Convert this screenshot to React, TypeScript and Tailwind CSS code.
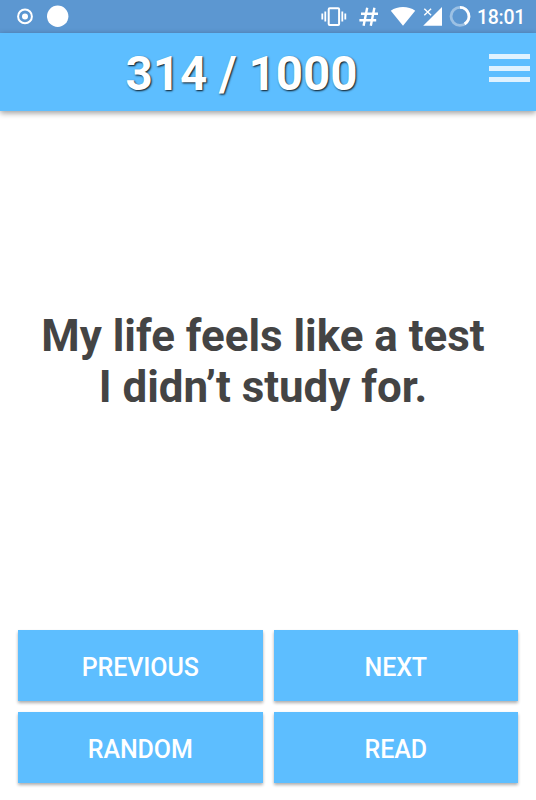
const BLUE_BUTTON =
  "flex h-[71px] items-center justify-center bg-[#5dbeff] pt-[3px] text-[25px] leading-none font-medium tracking-[-0.1px] text-white shadow-[0_2px_3px_rgba(0,0,0,0.32)]";

function StatusBar() {
  return (
    <div className="flex h-[33px] items-center bg-[#5c97d1] text-white">
      <svg className="ml-4 h-[33px] w-[18px]" viewBox="16 0 18 33" fill="none">
        <circle cx="25" cy="16.4" r="6.9" stroke="currentColor" strokeWidth="2" />
        <circle cx="25" cy="16.4" r="3" fill="currentColor" />
      </svg>
      <svg className="ml-3 h-[33px] w-6" viewBox="46 0 24 33">
        <circle cx="57.7" cy="16.3" r="10.7" fill="currentColor" />
      </svg>
      <svg className="ml-[250px] h-[33px] w-7" viewBox="320 0 28 33" fill="none" stroke="currentColor">
        <rect x="328.7" y="8.3" width="10.4" height="16.6" rx="1" strokeWidth="2" />
        <path d="M322.3 13.6v6M325.3 11.6v10M342.3 11.6v10M345.3 13.6v6" strokeWidth="1.8" />
      </svg>
      <svg className="ml-[10px] h-[33px] w-[21px]" viewBox="358 0 21 33" fill="none" stroke="currentColor" strokeWidth="2.4">
        <path d="M367.2 7.8L363.6 25.8M374.4 7.8L370.8 25.8M361 13.7H378M359.4 20.3H376.2" />
      </svg>
      <svg className="ml-[11px] h-[33px] w-[26px]" viewBox="390 0 26 33">
        <path d="M390.8 10.8C397.5 5.8 408.5 5.8 415.2 10.8L403 25.7Z" fill="currentColor" />
      </svg>
      <svg className="ml-[6px] h-[33px] w-[22px]" viewBox="422 0 22 33">
        <path d="M442 7V25.8H423.2L433.5 15.5Z" fill="currentColor" />
        <path d="M424.3 8.7l6.8 6.6M431.1 8.7l-6.8 6.6" stroke="currentColor" strokeWidth="1.4" fill="none" />
      </svg>
      <svg className="ml-1 h-[33px] w-6" viewBox="448 0 24 33" fill="none">
        <circle cx="460" cy="16.3" r="9" stroke="#9cc1e4" strokeWidth="2.8" />
        <path d="M460 7.3A9 9 0 0 1 464.6 24" stroke="currentColor" strokeWidth="2.8" />
      </svg>
      <span className="ml-[5px] pt-[2px] text-[19.5px] leading-[22px] font-medium tracking-[-0.3px]">18:01</span>
    </div>
  );
}

function Header() {
  return (
    <header className="flex h-[77.5px] items-center bg-[#5dbeff] shadow-[0_2px_6px_rgba(0,0,0,0.4)]">
      <h1 className="w-[483px] pt-[6px] text-center text-[47.5px] leading-none font-bold text-white [text-shadow:1px_1px_2px_rgba(0,0,0,0.9)]">
        314 / 1000
      </h1>
      <button className="ml-[6px] flex w-[41px] flex-col gap-[6.5px] pb-[7px]" aria-label="Menu">
        <span className="h-[5px] w-full bg-[#dff2ff]" />
        <span className="h-[5px] w-full bg-[#dff2ff]" />
        <span className="h-[5px] w-full bg-[#dff2ff]" />
      </button>
    </header>
  );
}

export default function App() {
  const actions = ["PREVIOUS", "NEXT", "RANDOM", "READ"];

  return (
    <div className="flex h-[800px] w-[536px] flex-col overflow-hidden bg-white font-[Roboto,sans-serif]">
      <StatusBar />
      <Header />
      <main className="flex flex-1 items-center justify-center">
        <p className="pr-[10px] pb-[16px] text-center text-[43.9px] leading-[51px] font-bold text-[#444444]">
          My life feels like a test
          <br />I didn’t study for.
        </p>
      </main>
      <div className="grid grid-cols-2 gap-x-[11px] gap-y-[11px] px-[18px] pb-[17px]">
        {actions.map((action) => (
          <button key={action} className={BLUE_BUTTON}>
            {action}
          </button>
        ))}
      </div>
    </div>
  );
}
